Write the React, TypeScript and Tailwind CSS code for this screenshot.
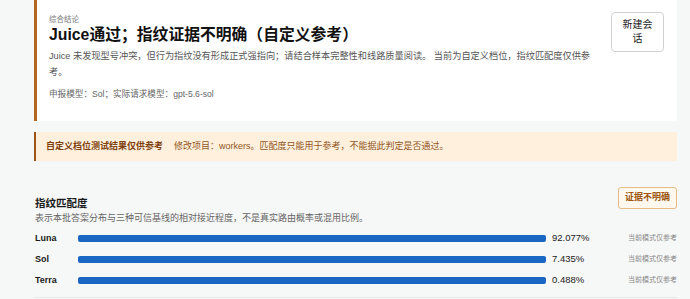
import React from "react";

const rows = [
  { name: "Luna", pct: "92.077%" },
  { name: "Sol", pct: "7.435%" },
  { name: "Terra", pct: "0.488%" },
];

const App = () => {
  return (
    <div
      className="w-[690px] h-[299px] overflow-hidden bg-[#f6f7f7]"
      style={{ fontFamily: '"Liberation Sans", "Noto Sans CJK SC", sans-serif' }}
    >
      <div className="ml-[34px] w-[643px]">
        {/* summary card */}
        <div className="flex items-start bg-white border-l-[3px] border-[#b5651d] pl-[12px] pr-[13px] pt-[15px] pb-[20px]">
          <div className="flex-1 pr-[10px]">
            <p className="text-[7.5px] leading-[10px] text-[#777]">综合结论</p>
            <h1 className="text-[15.8px] leading-[20px] font-bold text-[#111]">
              Juice通过；指纹证据不明确（自定义参考）
            </h1>
            <p className="mt-[3px] text-[9.2px] leading-[16px] text-[#555]">
              Juice 未发现型号冲突，但行为指纹没有形成正式强指向；请结合样本完整性和线路质量阅读。 当前为自定义档位，指纹匹配度仅供参考。
            </p>
            <p className="mt-[7px] text-[8.6px] leading-[14px] text-[#666]">
              申报模型：Sol；实际请求模型：gpt-5.6-sol
            </p>
          </div>
          <button className="mt-[-3px] w-[53px] shrink-0 rounded-[4px] border border-[#cfd3d6] bg-white px-[9px] py-[5px] text-[10px] leading-[14px] text-[#222]">
            新建会话
          </button>
        </div>

        {/* warning */}
        <div className="mt-[11px] flex h-[29px] items-center bg-[#fef0dc] border-l-2 border-[#9d5419] pl-[10px] text-[9px]">
          <span className="font-bold text-[#7e3f0e]">自定义档位测试结果仅供参考</span>
          <span className="ml-[11px] text-[#93561f]">
            修改项目：workers。匹配度只能用于参考，不能据此判定是否通过。
          </span>
        </div>

        {/* fingerprint match */}
        <div className="mt-[26px] flex items-start justify-between pl-[1px]">
          <div className="pt-[9px]">
            <h2 className="text-[10.5px] leading-[14px] font-bold text-[#1a1a1a]">指纹匹配度</h2>
            <p className="mt-[1px] text-[9px] leading-[14px] text-[#666]">
              表示本批答案分布与三种可信基线的相对接近程度，不是真实路由概率或混用比例。
            </p>
          </div>
          <span className="flex h-[22px] w-[59px] items-center justify-center rounded-[3px] border border-[#e8bb84] bg-[#fff8ee] text-[9px] font-bold text-[#9b560f]">
            证据不明确
          </span>
        </div>

        <div className="mt-[3px] pl-[1px]">
          {rows.map((r) => (
            <div key={r.name} className="flex h-[21px] items-center">
              <span className="w-[43px] text-[9px] font-bold text-[#1a1a1a]">{r.name}</span>
              <div className="h-[7px] flex-1 rounded-[2px] bg-[#1a66c3]" />
              <span className="ml-[6px] w-[76px] text-[9.5px] text-[#222]">{r.pct}</span>
              <span className="w-[49px] text-right text-[7px] text-[#888]">当前模式仅参考</span>
            </div>
          ))}
        </div>
        <div className="mt-[6px] border-t border-[#e6e8ea]" />
      </div>
    </div>
  );
};

export default App;
